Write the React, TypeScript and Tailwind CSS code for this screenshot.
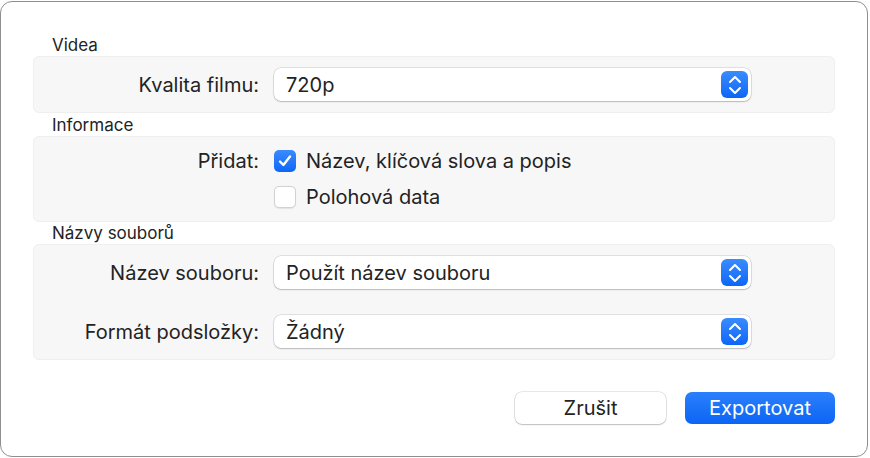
import React from "react";

const font = { fontFamily: "Inter, 'Noto Sans', 'Liberation Sans', sans-serif" };

const Stepper = () => (
  <div className="w-[27px] h-[27px] rounded-[6px] bg-gradient-to-b from-[#3a8bfd] to-[#0b66f6] flex items-center justify-center">
    <svg width="14" height="20" viewBox="0 0 14 20" fill="none">
      <path d="M2 7 7 2 12 7" stroke="white" strokeWidth="2" strokeLinecap="round" strokeLinejoin="round" />
      <path d="M2 13 7 18 12 13" stroke="white" strokeWidth="2" strokeLinecap="round" strokeLinejoin="round" />
    </svg>
  </div>
);

const Select = ({ value }: { value: string }) => (
  <div className="w-[477px] h-[33px] bg-white rounded-[7px] shadow-[0_0_0_0.5px_rgba(0,0,0,0.18),0_1px_1.5px_rgba(0,0,0,0.18)] flex items-center justify-between pl-[12px] pr-[3px]">
    <span className="text-[20px] leading-[24px] text-[#232323]">{value}</span>
    <Stepper />
  </div>
);

const Checkbox = ({ checked }: { checked?: boolean }) =>
  checked ? (
    <div className="w-[22px] h-[22px] rounded-[5px] bg-gradient-to-b from-[#3a8bfd] to-[#0b66f6] flex items-center justify-center">
      <svg width="16" height="16" viewBox="0 0 16 16" fill="none">
        <path d="M3 8.5 6.4 12 13 3.5" stroke="white" strokeWidth="2.4" strokeLinecap="round" strokeLinejoin="round" />
      </svg>
    </div>
  ) : (
    <div className="w-[22px] h-[22px] rounded-[5px] bg-white border border-[#d2d2d2] shadow-[0_0.5px_1px_rgba(0,0,0,0.08)]" />
  );

const Heading = ({ children }: { children: React.ReactNode }) => (
  <div className="pl-[19px] text-[17px] text-[#232323] leading-[22px] h-[22px]">{children}</div>
);

const Row = ({ label, children }: { label: string; children: React.ReactNode }) => (
  <div className="flex items-center">
    <div className="w-[240px] pr-[15px] text-right text-[20px] leading-[24px] text-[#232323]">{label}</div>
    {children}
  </div>
);

export default function App() {
  return (
    <div className="w-[870px] h-[458px] bg-white" style={font}>
      <div className="w-[868px] h-[456px] mt-[1px] border border-[#8e8e8e] rounded-[12px] px-[32px] pt-[32px]">
        <Heading>Videa</Heading>
        <div className="h-[57px] bg-[#f7f7f7] border border-[#efefef] rounded-[6px] flex items-center">
          <Row label="Kvalita filmu:">
            <Select value="720p" />
          </Row>
        </div>

        <div className="mt-[1px]">
          <Heading>Informace</Heading>
        </div>
        <div className="h-[86px] bg-[#f7f7f7] border border-[#efefef] rounded-[6px] flex flex-col justify-center gap-[12px]">
          <Row label="Přidat:">
            <div className="flex items-center gap-[10px]">
              <Checkbox checked />
              <span className="text-[20px] leading-[24px] text-[#232323]">Název, klíčová slova a popis</span>
            </div>
          </Row>
          <Row label="">
            <div className="flex items-center gap-[10px]">
              <Checkbox />
              <span className="text-[20px] leading-[24px] text-[#232323]">Polohová data</span>
            </div>
          </Row>
        </div>

        <Heading>Názvy souborů</Heading>
        <div className="h-[116px] bg-[#f7f7f7] border border-[#efefef] rounded-[6px] flex flex-col justify-center gap-[26px]">
          <Row label="Název souboru:">
            <Select value="Použít název souboru" />
          </Row>
          <Row label="Formát podsložky:">
            <Select value="Žádný" />
          </Row>
        </div>

        <div className="flex justify-end gap-[19px] mt-[32px]">
          <button className="w-[151px] h-[32px] bg-white rounded-[7px] shadow-[0_0_0_0.5px_rgba(0,0,0,0.18),0_1px_1.5px_rgba(0,0,0,0.18)] text-[20px] text-[#232323]">
            Zrušit
          </button>
          <button className="w-[150px] h-[32px] rounded-[7px] bg-gradient-to-b from-[#2a80fb] to-[#0a64f5] text-[20px] text-white">
            Exportovat
          </button>
        </div>
      </div>
    </div>
  );
}
